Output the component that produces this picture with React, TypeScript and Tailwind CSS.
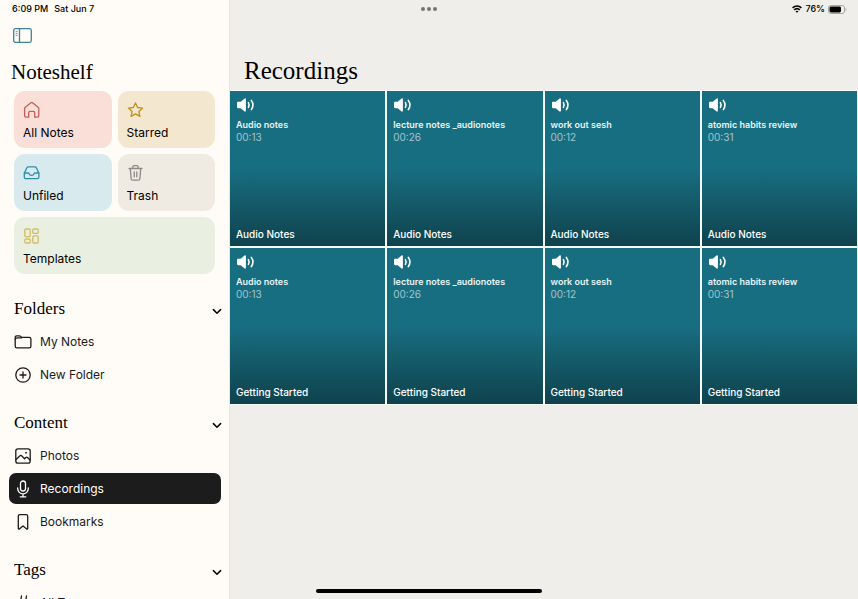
import { ReactNode } from "react";

type Tile = { label: string; color: string; icon: ReactNode; wide?: boolean };
type Item = { label: string; icon: ReactNode; active?: boolean };
type Recording = { title: string; time: string };

const RECORDINGS: Recording[] = [
  { title: "Audio notes", time: "00:13" },
  { title: "lecture notes _audionotes", time: "00:26" },
  { title: "work out sesh", time: "00:12" },
  { title: "atomic habits review", time: "00:31" },
];

const NOTEBOOKS = ["Audio Notes", "Getting Started"];

export default function App() {
  return (
    <div className="relative flex h-screen overflow-hidden bg-[#efeeeb] font-[Inter,sans-serif] text-black">
      <StatusBar />
      <Sidebar />
      <main className="min-w-0 flex-1 pt-14">
        <h1 className="h-[34px] pl-3.5 font-['Liberation_Serif',serif] text-[25px] leading-[30px]">
          Recordings
        </h1>
        <div className="grid grid-cols-4 gap-0.5 bg-[#f6fbfa] pt-px pr-px pb-px">
          {NOTEBOOKS.map((notebook) =>
            RECORDINGS.map((r) => (
              <RecordingCard key={notebook + r.title} recording={r} notebook={notebook} />
            ))
          )}
        </div>
      </main>
      {/* home indicator */}
      <div className="absolute bottom-[6px] left-1/2 h-1 w-[226px] -translate-x-1/2 rounded-full bg-black" />
    </div>
  );
}

function StatusBar() {
  return (
    <header className="absolute inset-x-0 top-0 grid h-[18px] grid-cols-3 items-center pr-[11px] pl-3 text-[9px] font-medium">
      <div className="flex gap-1.5">
        <span>6:09 PM</span>
        <span>Sat Jun 7</span>
      </div>
      <button aria-label="Multitasking" className="flex justify-center gap-0.5">
        <span className="size-1 rounded-full bg-[#757575]" />
        <span className="size-1 rounded-full bg-[#757575]" />
        <span className="size-1 rounded-full bg-[#757575]" />
      </button>
      <div className="flex items-center justify-end gap-[3px]">
        <WifiIcon />
        <span>76%</span>
        <BatteryIcon />
      </div>
    </header>
  );
}

function Sidebar() {
  const tiles: Tile[] = [
    { label: "All Notes", color: "bg-[#f9dfd8]", icon: <HomeIcon /> },
    { label: "Starred", color: "bg-[#f3e7d0]", icon: <StarIcon /> },
    { label: "Unfiled", color: "bg-[#d8eaed]", icon: <TrayIcon /> },
    { label: "Trash", color: "bg-[#efebe3]", icon: <TrashIcon /> },
    { label: "Templates", color: "bg-[#e9f0e1]", icon: <TemplatesIcon />, wide: true },
  ];

  return (
    <aside className="w-[230px] shrink-0 overflow-hidden border-r border-[#e3e7e4] bg-[#fffcf7] pt-7">
      <button aria-label="Toggle sidebar" className="ml-[13px] block">
        <PanelIcon />
      </button>
      <h2 className="mt-[15px] h-[33px] pl-[11px] font-['Liberation_Serif',serif] text-[21px] leading-7">
        Noteshelf
      </h2>
      <div className="grid grid-cols-2 gap-1.5 px-3.5">
        {tiles.map((t) => (
          <button
            key={t.label}
            className={`flex h-[57px] flex-col items-start rounded-[11px] pt-2.5 pl-[9px] text-[12px] ${t.color} ${
              t.wide ? "col-span-2" : ""
            }`}
          >
            {t.icon}
            <span className="mt-1.5 leading-4">{t.label}</span>
          </button>
        ))}
      </div>
      <nav className="mt-[18px] flex flex-col gap-4 px-2 pl-[9px]">
        <Section
          title="Folders"
          items={[
            { label: "My Notes", icon: <FolderIcon /> },
            { label: "New Folder", icon: <PlusIcon /> },
          ]}
        />
        <Section
          title="Content"
          items={[
            { label: "Photos", icon: <PhotoIcon /> },
            { label: "Recordings", icon: <MicIcon />, active: true },
            { label: "Bookmarks", icon: <BookmarkIcon /> },
          ]}
        />
        <Section title="Tags" items={[{ label: "All Tags", icon: <HashIcon /> }]} />
      </nav>
    </aside>
  );
}

function Section({ title, items }: { title: string; items: Item[] }) {
  return (
    <section>
      <button className="flex h-[34px] w-full items-center justify-between pl-[5px]">
        <span className="font-['Liberation_Serif',serif] text-[17px] leading-5">{title}</span>
        <svg width="8" height="7" viewBox="1 0 8 7" fill="none" className="mt-1 overflow-visible" aria-hidden>
          <path d="M1.4 1.6 5 5.2l3.6-3.6" stroke="currentColor" strokeWidth="1.5" strokeLinecap="round" strokeLinejoin="round" />
        </svg>
      </button>
      <ul className="flex flex-col gap-0.5">
        {items.map((item) => (
          <li key={item.label}>
            <button
              className={`flex h-[31px] w-full items-center gap-2 rounded-[7px] pl-[5px] text-[12px] ${
                item.active ? "bg-[#1c1c1c] text-white" : "text-[#1a1a1a]"
              }`}
            >
              {item.icon}
              <span>{item.label}</span>
            </button>
          </li>
        ))}
      </ul>
    </section>
  );
}

function RecordingCard({ recording, notebook }: { recording: Recording; notebook: string }) {
  return (
    <button className="flex aspect-square flex-col items-start bg-linear-to-b from-[#186e81] from-50% to-[#0f424d] px-1.5 pt-1.5 pb-[5px] text-left text-[10px] leading-[13px] font-medium text-white">
      <SpeakerIcon />
      <span className="mt-[5px] text-[9px] font-semibold text-[#e9f3f4]">{recording.title}</span>
      <span className="font-normal text-[#a3c5cc]">{recording.time}</span>
      <span className="mt-auto">{notebook}</span>
    </button>
  );
}

/* ---------- icons ---------- */

function LineIcon({ color = "", children }: { color?: string; children: ReactNode }) {
  return (
    <svg
      width="18"
      height="18"
      viewBox="0 0 18 18"
      fill="none"
      stroke="currentColor"
      strokeWidth="1.3"
      strokeLinecap="round"
      strokeLinejoin="round"
      className={`shrink-0 ${color}`}
      aria-hidden
    >
      {children}
    </svg>
  );
}

function PanelIcon() {
  return (
    <svg width="19" height="15" viewBox="0 0 19 15" fill="none" stroke="#3c8597" aria-hidden>
      <rect x=".7" y=".7" width="17.6" height="13.6" rx="1.8" strokeWidth="1.3" />
      <path d="M6.5.6v13.8" strokeWidth="1.3" />
      <path d="M2.6 3.4h2M2.6 5.4h2M2.6 7.4h2" strokeWidth=".8" />
    </svg>
  );
}

function HomeIcon() {
  return (
    <LineIcon color="text-[#c0605a]">
      <path d="M1.6 7.6c0-.6.2-1 .7-1.4l5.6-4.5c.5-.4 1.1-.4 1.6 0l5.6 4.5c.5.4.7.8.7 1.4v7.2c0 .8-.6 1.4-1.4 1.4h-2.7v-4.4c0-.8-.6-1.4-1.4-1.4H7.1c-.8 0-1.4.6-1.4 1.4v4.4H3c-.8 0-1.4-.6-1.4-1.4z" />
    </LineIcon>
  );
}

function StarIcon() {
  return (
    <LineIcon color="text-[#c4901c]">
      <path d="m8.5 1.9 2.1 4.6 5 .6-3.7 3.4 1 4.9-4.4-2.5-4.4 2.5 1-4.9-3.7-3.4 5-.6z" />
    </LineIcon>
  );
}

function TrayIcon() {
  return (
    <LineIcon color="text-[#2c8fae]">
      <path d="M1.3 9.2 3.7 4c.3-.7.9-1.1 1.6-1.1h6.6c.7 0 1.3.4 1.6 1.1l2.4 5.2v3.9c0 .9-.7 1.6-1.6 1.6H2.9c-.9 0-1.6-.7-1.6-1.6z" />
      <path d="M1.4 9h3.7c.5 0 .8.2 1 .7.4 1 1.3 1.6 2.5 1.6s2.1-.6 2.5-1.6c.2-.5.5-.7 1-.7h3.7" />
    </LineIcon>
  );
}

function TrashIcon() {
  return (
    <LineIcon color="text-[#8b8a86]">
      <path d="M2 4.5h13M5.8 4.3V3c0-.8.6-1.4 1.4-1.4h2.6c.8 0 1.4.6 1.4 1.4v1.3M3.3 4.7l.8 10c.1.9.7 1.5 1.6 1.5h5.6c.9 0 1.5-.6 1.6-1.5l.8-10M7.2 8v4.8M9.8 8v4.8" />
    </LineIcon>
  );
}

function TemplatesIcon() {
  return (
    <LineIcon color="text-[#d3bd62]">
      <rect x="1.8" y="2" width="5.4" height="7.6" rx="1.2" />
      <rect x="9.8" y="2" width="5.4" height="4.4" rx="1.2" />
      <rect x="1.8" y="12" width="5.4" height="4" rx="1.2" />
      <rect x="9.8" y="8.8" width="5.4" height="7.2" rx="1.2" />
    </LineIcon>
  );
}

function FolderIcon() {
  return (
    <LineIcon>
      <path d="M1.2 13.2V4.5c0-1 .6-1.6 1.6-1.6h2.5c.5 0 .9.1 1.2.4l.7.6c.3.3.7.4 1.2.4h6.8c1.1 0 1.7.6 1.7 1.7v7.2c0 1.1-.6 1.7-1.7 1.7H2.9c-1.1 0-1.7-.6-1.7-1.7z" />
      <path d="M1.3 6.4c.2-1 .8-1.6 1.8-1.6h4.6" />
    </LineIcon>
  );
}

function PlusIcon() {
  return (
    <LineIcon>
      <circle cx="9" cy="9" r="7.2" />
      <path d="M9 6v6M6 9h6" />
    </LineIcon>
  );
}

function PhotoIcon() {
  return (
    <LineIcon>
      <rect x="1.8" y="1.8" width="14.4" height="14.4" rx="2.2" />
      <path d="m2 12.500 4-3.700c.5-.5 1.100-.5 1.600 0l3 3 1.300-1.300c.5-.5 1.100-.5 1.600 0L16 13" />
      <circle cx="12" cy="5.8" r=".7" fill="currentColor" strokeWidth=".4" />
    </LineIcon>
  );
}

function MicIcon() {
  return (
    <LineIcon>
      <rect x="6.5" y="1" width="5" height="10" rx="2.5" />
      <path d="M3.7 8v.6a5.3 5.3 0 0 0 10.6 0V8M9 14v2.8M6.2 16.8h5.6" />
    </LineIcon>
  );
}

function BookmarkIcon() {
  return (
    <LineIcon>
      <path d="M4.3 3.2c0-1 .6-1.6 1.6-1.6h6.2c1 0 1.6.6 1.6 1.6v12.3c0 .7-.5.9-1 .5L9 13l-3.7 3c-.5.4-1 .2-1-.5z" />
    </LineIcon>
  );
}

function HashIcon() {
  return (
    <LineIcon>
      <path d="M7.5 2 5 16M12.5 2 10 16M3 6.5h12.5M2 11.5h12.5" />
    </LineIcon>
  );
}

function SpeakerIcon() {
  return (
    <svg width="20" height="16" viewBox="0 0 20 16" fill="none" aria-hidden>
      <path
        fill="currentColor"
        d="M1 6c0-.7.5-1.2 1.2-1.2h2.5l3.9-3.2c.6-.5 1.300-.2 1.300.6v11.600c0 .8-.7 1.100-1.300.6l-3.900-3.200H2.200C1.500 11.200 1 10.700 1 10z"
      />
      <path
        stroke="currentColor"
        strokeWidth="1.6"
        strokeLinecap="round"
        d="M12.4 5.600c.9 1.500.9 3.300 0 4.800M15.300 3.400c2 2.800 2 6.400 0 9.200"
      />
    </svg>
  );
}

function WifiIcon() {
  return (
    <svg width="10" height="8" viewBox="0 0 10 8" fill="none" stroke="currentColor" strokeWidth="1.5" aria-hidden>
      <path d="M.6 2.9c2.500-2.500 6.300-2.500 8.800 0M2.200 4.900c1.600-1.500 4-1.500 5.600 0" />
      <path d="M3.5 6.300c.9-.8 2.100-.8 3 0L5 7.800z" fill="currentColor" stroke="none" />
    </svg>
  );
}

function BatteryIcon() {
  return (
    <svg width="19" height="9" viewBox="0 0 19 9" fill="none" aria-hidden>
      <rect x=".5" y=".5" width="16" height="8" rx="2.4" stroke="#a5a5a3" />
      <rect x="1.5" y="1.5" width="11.500" height="6" rx="1.4" fill="black" />
      <path d="M17.5 3c1.2.4 1.2 2.600 0 3z" fill="#a5a5a3" />
    </svg>
  );
}
